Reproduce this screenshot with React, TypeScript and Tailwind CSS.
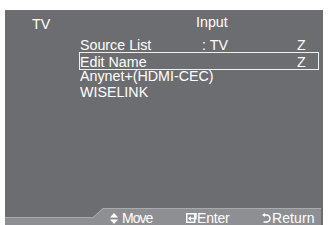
import React from "react";

const font = { fontFamily: '"Liberation Sans", Arial, sans-serif' };

function MoveIcon() {
  return (
    <svg width="8" height="11" viewBox="0 0 8 11" className="shrink-0">
      <polygon points="4,0 8,4.5 0,4.5" fill="#fff" />
      <polygon points="0,6.5 8,6.5 4,11" fill="#fff" />
    </svg>
  );
}

function EnterIcon() {
  return (
    <svg width="11" height="10" viewBox="0 0 11 10" className="shrink-0">
      <rect x="0.75" y="0.75" width="8" height="8.5" fill="none" stroke="#fff" strokeWidth="1.5" />
      <path d="M10 0 V5.5 H4" fill="none" stroke="#fff" strokeWidth="1.5" />
      <polygon points="2,5.5 5,3 5,8" fill="#fff" />
    </svg>
  );
}

function ReturnIcon() {
  return (
    <svg width="9" height="10" viewBox="0 0 9 10" className="shrink-0">
      <path d="M2.5 2 H4.5 A3.5 3.5 0 0 1 4.5 9 H1.5" fill="none" stroke="#fff" strokeWidth="1.5" />
      <polygon points="0,2 3,0 3,4" fill="#fff" />
    </svg>
  );
}

function T({ children }: { children: React.ReactNode }) {
  return <span className="inline-block whitespace-nowrap origin-left scale-x-[0.92]">{children}</span>;
}

export default function App() {
  const rows = [
    { label: "Source List", value: ": TV", z: "Z", cls: "h-[16px] leading-[16px]" },
    { label: "Edit Name", value: "", z: "Z", selected: true, cls: "h-[15px] leading-[15px] pt-[0.5px]" },
    { label: "Anynet+(HDMI-CEC)", value: "", z: "", cls: "h-[16px] leading-[16px]" },
    { label: "WISELINK", value: "", z: "", cls: "h-[16px] leading-[16px]" },
  ];
  return (
    <div className="w-[329px] h-[225px] bg-white pt-[10px] pl-[5px] pr-[6px] overflow-hidden" style={font}>
      <div className="h-[215px] bg-[#6c6d71] flex flex-col text-white">
        <div className="h-[27px] grid grid-cols-[191px_auto] text-[15.5px] leading-[16px]">
          <div className="pl-[27px] mt-[6px]"><T>TV</T></div>
          <div className="mt-[4px]"><T>Input</T></div>
        </div>
        <div className="pl-[75px] pr-[4px] text-[15.5px]">
          {rows.map((r) => (
            <div key={r.label} className={`relative flex ${r.cls}`}>
              {r.selected && (
                <span className="absolute -top-[1px] -bottom-[2px] -left-[1px] right-0 border border-[#f0f0f0]" />
              )}
              <div className={r.z ? "w-[122px]" : ""}><T>{r.label}</T></div>
              {r.z && <div className="w-[95px]">{r.value && <T>{r.value}</T>}</div>}
              {r.z && <div><T>{r.z}</T></div>}
            </div>
          ))}
        </div>
        <div className="mt-auto h-[17px] flex items-end pr-[2px]">
          <div className="w-[88px] h-[8px] bg-[#8e8f93] border-t border-[#a9aaad]" />
          <svg width="10" height="17" viewBox="0 0 10 17" className="shrink-0 block">
            <polygon points="0,9 10,0 10,17 0,17" fill="#8e8f93" />
            <line x1="0" y1="9.5" x2="10" y2="0.5" stroke="#a9aaad" strokeWidth="1" />
          </svg>
          <div className="flex-1 h-[17px] bg-[#8e8f93] border-t border-[#a9aaad] pt-[2px] flex text-[14px] leading-[15px]">
            <div className="w-[83px] pl-[7px] flex items-start gap-[4px]">
              <div className="mt-[2px]"><MoveIcon /></div>
              <span className="tracking-[-1px]">Move</span>
            </div>
            <div className="w-[76px] flex items-start">
              <div className="mt-[2px]"><EnterIcon /></div>
              <span className="tracking-[-0.2px]">Enter</span>
            </div>
            <div className="flex items-start gap-[1px]">
              <div className="mt-[2px]"><ReturnIcon /></div>
              <span className="tracking-[0.1px]">Return</span>
            </div>
          </div>
        </div>
      </div>
    </div>
  );
}
